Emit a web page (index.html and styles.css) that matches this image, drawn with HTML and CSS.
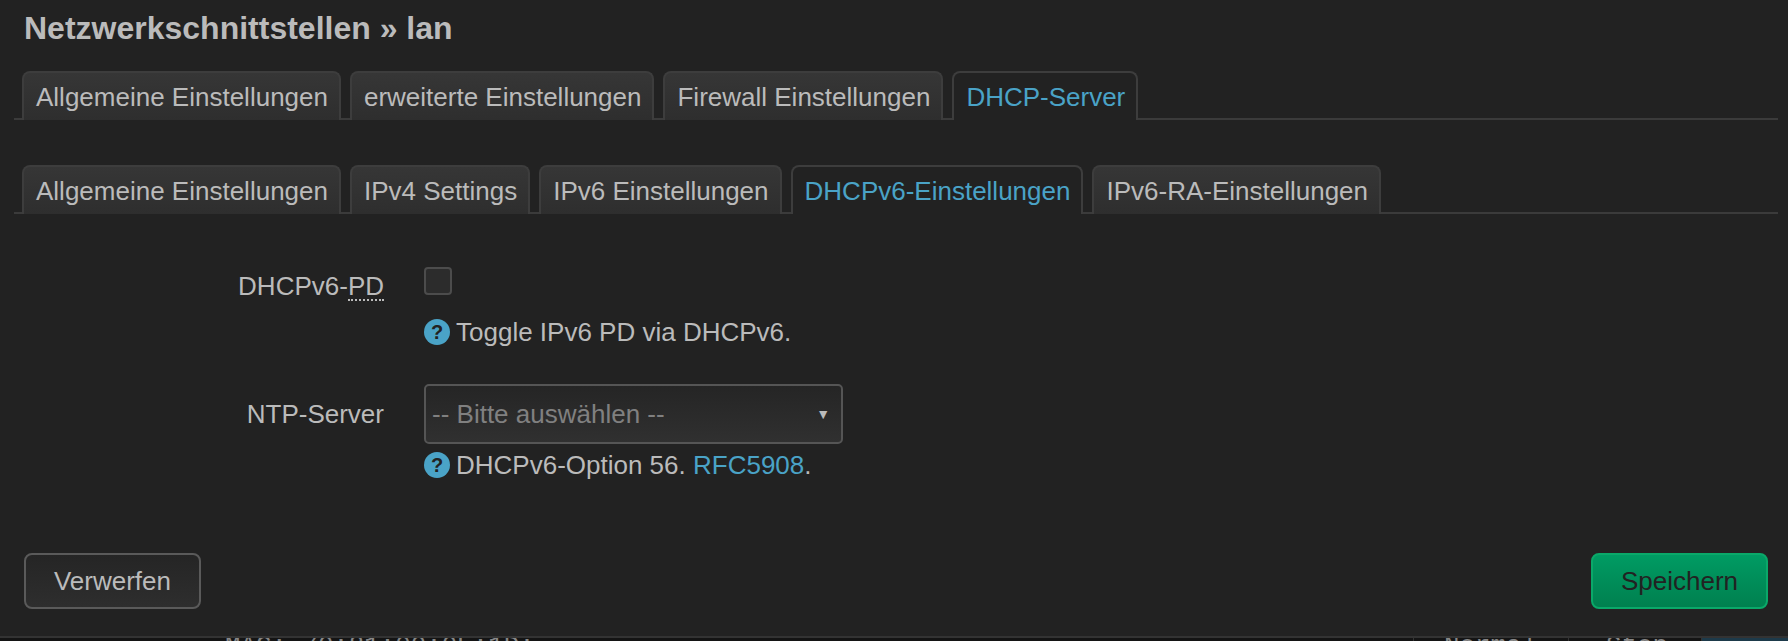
FILE: index.html
```html
<!DOCTYPE html>
<html lang="de">
<head>
<meta charset="utf-8">
<title>Netzwerkschnittstellen » lan</title>
<link rel="stylesheet" href="styles.css">
</head>
<body>
<main class="dialog">
  <h3 class="title">Netzwerkschnittstellen » lan</h3>
  <ul class="tabs tabs-main">
    <li class="tab">Allgemeine Einstellungen</li>
    <li class="tab">erweiterte Einstellungen</li>
    <li class="tab">Firewall Einstellungen</li>
    <li class="tab active">DHCP-Server</li>
  </ul>
  <ul class="tabs tabs-sub">
    <li class="tab">Allgemeine Einstellungen</li>
    <li class="tab">IPv4 Settings</li>
    <li class="tab">IPv6 Einstellungen</li>
    <li class="tab active">DHCPv6-Einstellungen</li>
    <li class="tab">IPv6-RA-Einstellungen</li>
  </ul>
  <div class="form">
    <div class="row row-check">
      <label class="label"><span class="abbr-wrap">DHCPv6-<abbr class="abbr">PD</abbr></span></label>
      <div class="field">
        <span class="checkbox"></span>
        <p class="help help-check"><span class="q">?</span>Toggle IPv6 PD via DHCPv6.</p>
      </div>
    </div>
    <div class="row row-select">
      <label class="label label-select">NTP-Server</label>
      <div class="field">
        <div class="select"><span>-- Bitte auswählen --</span><span class="arrow">▼</span></div>
        <p class="help help-select"><span class="q">?</span>DHCPv6-Option 56. <a class="link">RFC5908</a>.</p>
      </div>
    </div>
  </div>
  <div class="actions">
    <button class="btn btn-reset">Verwerfen</button>
    <button class="btn btn-save">Speichern</button>
  </div>
</main>
<div class="behind">
  <span class="cell cell-mac">MAC: 70:81:00:0E:1D:</span>
  <span class="cell cell-mode">Normal</span>
  <span class="cell cell-state">Stop</span>
  <span class="cell cell-action"></span>
</div>
</body>
</html>
```
FILE: styles.css
```css
* { box-sizing: border-box; }
html, body { margin: 0; padding: 0; height: 641px; overflow: hidden; }
body {
  background: #141414;
  color: #bbb;
  font-family: "Liberation Sans", Arial, sans-serif;
  font-size: 26px;
}
.dialog {
  height: 638px;
  background: #222;
  border-bottom: 2px solid #333;
  padding: 0 10px 0 14px;
}
.title {
  margin: 0;
  padding: 12px 0 0 10px;
  height: 71px;
  font-size: 32px;
  line-height: 32px;
  font-weight: 700;
  color: #bbb;
}
.tabs {
  list-style: none;
  margin: 0;
  padding: 0 0 0 8px;
  display: flex;
  gap: 9px;
  height: 49px;
  border-bottom: 2px solid #3b3b3b;
}
.tabs-sub { margin-top: 45px; }
.tab {
  height: 49px;
  padding: 9px 11px 0 12px;
  line-height: 30px;
  color: #bbb;
  background: linear-gradient(#363636, #2e2e2e);
  border: 2px solid #3d3d3d;
  border-bottom: none;
  border-radius: 8px 8px 0 0;
}
.tab.active {
  color: #4aa3c7;
  background: #222;
}
.form { padding-top: 53px; }
.row { display: flex; }
.label {
  width: 370px;
  text-align: right;
  line-height: 30px;
  color: #bbb;
}
.row-check .label { padding-top: 4px; }
.abbr {
  display: inline-block;
  line-height: 26px;
  border-bottom: 2px dotted #bbb;
  text-decoration: none;
}
.field { margin-left: 40px; }
.row-select { margin-top: 38px; }
.label-select { padding-top: 15px; }
.checkbox {
  display: block;
  width: 28px;
  height: 28px;
  background: #2c2c2c;
  border: 2px solid #4c4c4c;
  border-radius: 4px;
}
.help {
  margin: 0;
  display: flex;
  align-items: center;
  line-height: 28px;
  white-space: pre;
}
.help-check { margin-top: 23px; }
.help-select { margin-top: 7px; }
.q {
  width: 26px;
  height: 26px;
  margin-right: 6px;
  border-radius: 50%;
  background: #4aa3c7;
  color: #222;
  font-size: 20px;
  font-weight: 700;
  line-height: 26px;
  text-align: center;
  flex: none;
}
.link { color: #4aa3c7; }
.select {
  width: 419px;
  height: 60px;
  display: flex;
  align-items: center;
  justify-content: space-between;
  padding: 0 11px 0 6px;
  color: #808080;
  background: linear-gradient(#252525, #303030);
  border: 2px solid #555;
  border-radius: 5px;
}
.arrow { font-size: 14px; color: #bbb; }
.actions {
  display: flex;
  justify-content: space-between;
  padding: 0 10px 0 10px;
  margin-top: 74px;
}
.btn {
  width: 177px;
  height: 56px;
  font: inherit;
  border-radius: 8px;
}
.btn-reset {
  color: #bbb;
  background: linear-gradient(#252525, #2e2e2e);
  border: 2px solid #5a5a5a;
}
.btn-save {
  color: #222;
  background: linear-gradient(#009b63, #00804f);
  border: 2px solid #0aa869;
}
.behind {
  height: 3px;
  overflow: hidden;
  display: flex;
  font-family: "Liberation Mono", monospace;
  font-size: 25.8px;
  line-height: 18px;
  color: #888;
  white-space: pre;
}
.cell { display: block; height: 3px; border-left: 1px solid #333; }
.cell-mac { width: 1413px; padding-left: 225px; border-left: none; }
.cell-mode { width: 155px; padding-left: 30px; }
.cell-state { width: 133px; padding-left: 37px; }
.cell-action { flex: 1; background: #1d3a4a; }
```
